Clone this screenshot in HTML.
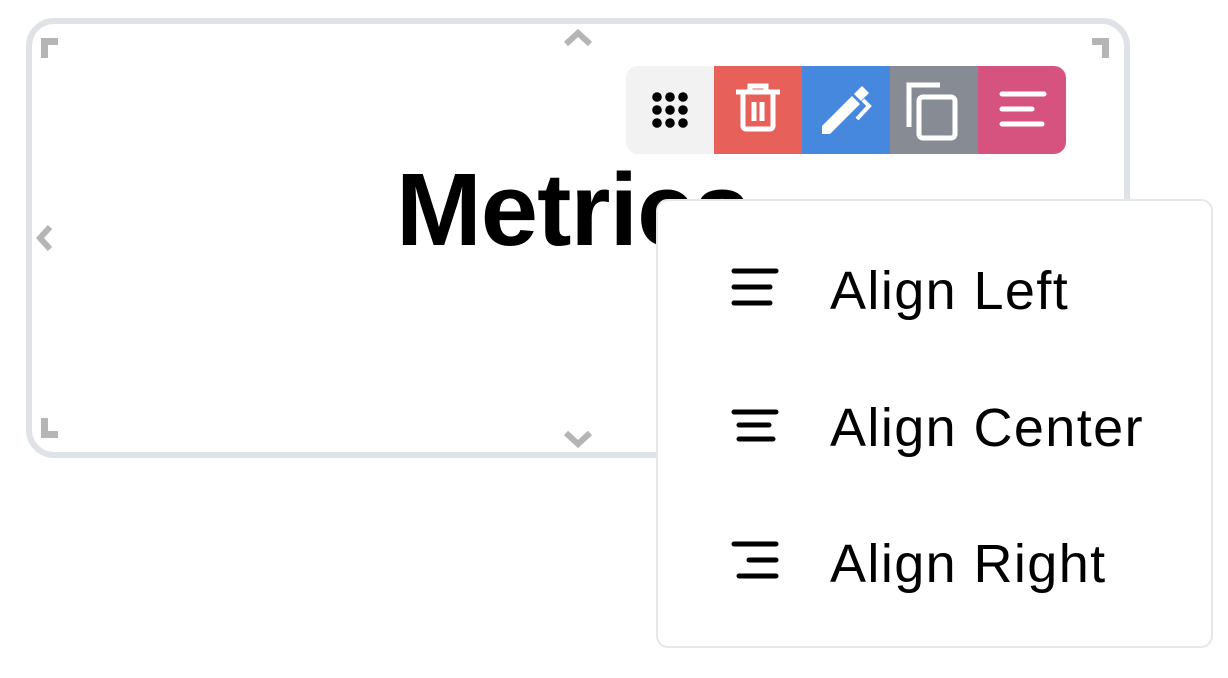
<!DOCTYPE html>
<html><head><meta charset="utf-8"><style>
html,body{margin:0;padding:0;background:#fff;width:1228px;height:678px;overflow:hidden;position:relative;font-family:"Liberation Sans",sans-serif}
.frame{position:absolute;left:26px;top:18px;width:1092px;height:428px;border:6px solid #dfe2e7;border-radius:28px}
.title{position:absolute;left:396px;top:150px;font-weight:bold;font-size:103px;line-height:120px;letter-spacing:-1px;color:#000}
.tb{position:absolute;top:66px;height:88px;width:88px}
.menu{position:absolute;left:656px;top:199px;width:553px;height:445px;border:2px solid #e6e7ea;border-radius:12px;background:#fff}
.item{position:absolute;left:172px;font-size:54px;letter-spacing:1.4px;color:#000;line-height:60px}
</style></head><body>
<div class="frame"></div>
<svg width="1228" height="678" style="position:absolute;left:0;top:0">
<g fill="#b5b5b5">
<path d="M41 38h17v7h-10v13h-7z"/>
<path d="M1109 38h-17v7h10v13h7z"/>
<path d="M41 438h17v-7h-10v-13h-7z"/>
</g>
<g fill="none" stroke="#b5b5b5" stroke-width="6">
<path d="M566 44l12-11 12 11"/>
<path d="M566 433l12 11 12-11"/>
<path d="M50 227l-10 11 10 11"/>
</g>
</svg>
<div class="title">Metrics</div>
<div class="tb" style="left:626px;background:#f2f2f2;border-radius:12px 0 0 12px">
<svg width="88" height="88"><g fill="#000"><circle cx="31" cy="31" r="4.8"/><circle cx="44" cy="31" r="4.8"/><circle cx="57" cy="31" r="4.8"/><circle cx="31" cy="44" r="4.8"/><circle cx="44" cy="44" r="4.8"/><circle cx="57" cy="44" r="4.8"/><circle cx="31" cy="57" r="4.8"/><circle cx="44" cy="57" r="4.8"/><circle cx="57" cy="57" r="4.8"/></g></svg></div>
<div class="tb" style="left:714px;background:#e8605a">
<svg width="88" height="88" fill="none" stroke="#fff" stroke-width="5"><path d="M22 26h44M36 26v-6h16v6"/><path d="M29 27v33a3 3 0 0 0 3 3h24a3 3 0 0 0 3-3V27"/><path d="M40 36v19M48 36v19"/></svg></div>
<div class="tb" style="left:802px;background:#4688dd">
<svg width="88" height="88"><path d="M20 60l30-30 8 8-30 30h-8z" fill="#fff"/><path d="M52 28l8-8 7 7-8 8z" fill="#fff"/><path d="M61 34l6 6-12 13" fill="none" stroke="#fff" stroke-width="4"/></svg></div>
<div class="tb" style="left:890px;background:#878c94">
<svg width="88" height="88" fill="none" stroke="#fff" stroke-width="5"><path d="M19 61V19h31"/><rect x="29" y="31" width="36" height="41" rx="4"/></svg></div>
<div class="tb" style="left:978px;background:#d6537f;border-radius:0 12px 12px 0">
<svg width="88" height="88" stroke="#fff" stroke-width="5" stroke-linecap="round"><path d="M24 28h42M24 43h30M24 58h40"/></svg></div>
<div class="menu">
<svg width="553" height="445" style="position:absolute;left:-2px;top:-2px" stroke="#000" stroke-width="5" stroke-linecap="round" fill="none">
<path d="M78 72h42M78 88h36M78 104h36"/>
<path d="M78 213h42M83 226h30M83 240h34"/>
<path d="M78 345h42M93 361h27M83 377h37"/>
</svg>
<div class="item" style="top:60px">Align Left</div>
<div class="item" style="top:197px">Align Center</div>
<div class="item" style="top:333px">Align Right</div>
</div>
</body></html>
